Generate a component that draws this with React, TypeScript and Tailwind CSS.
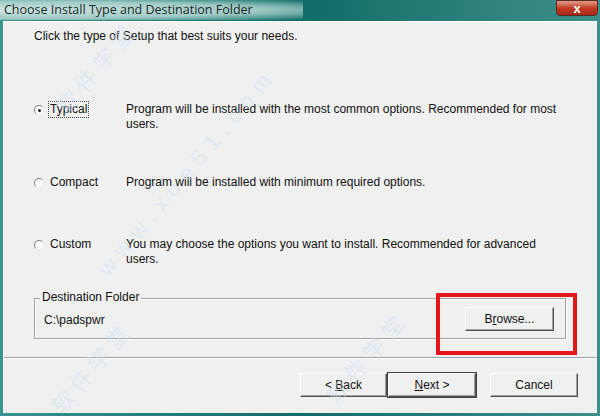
import React from 'react';

const font = { fontFamily: '"Liberation Sans", Arial, sans-serif' };
const cjk = { fontFamily: '"Noto Sans CJK SC", sans-serif' };

function Radio({ checked }: { checked?: boolean }) {
  return (
    <span className="relative inline-block w-[10px] h-[10px] rounded-full border border-t-[#808080] border-l-[#808080] border-r-[#e8e8e8] border-b-[#e8e8e8] bg-white">
      {checked && <span className="absolute left-[3px] top-[3px] w-[3px] h-[3px] rounded-full bg-[#222]" />}
    </span>
  );
}

function Option({ label, checked, focus, lines }: { label: string; checked?: boolean; focus?: boolean; lines: string[] }) {
  return (
    <div className="flex items-start">
      <div className="w-[92px] flex items-center gap-[4px] h-[15px]">
        <Radio checked={checked} />
        <span className={focus ? 'border border-dotted border-[#444] px-[1px] leading-[15px]' : 'px-[2px] leading-[15px]'}>{label}</span>
      </div>
      <div className="leading-[15px]">
        {lines.map((l) => (
          <div key={l}>{l}</div>
        ))}
      </div>
    </div>
  );
}

function Btn({ children, def, className }: { children: React.ReactNode; def?: boolean; className?: string }) {
  return (
    <div
      className={
        'h-[24px] flex items-center justify-center bg-[#f0f0f0] border border-t-[#fdfdfd] border-l-[#fdfdfd] border-r-[#505050] border-b-[#505050] shadow-[inset_-1px_-1px_0_#a0a0a0] ' +
        (def ? 'outline outline-1 outline-[#404040] ' : '') +
        (className || '')
      }
    >
      {children}
    </div>
  );
}

export default function App() {
  return (
    <div className="relative w-[600px] h-[416px] overflow-hidden bg-gradient-to-r from-[#3a9490] via-[#0e6b68] to-[#3d8f8c] flex flex-col text-[12px] text-[#111]" style={font}>
      {/* title bar */}
      <div className="h-[21px] flex items-start justify-between shrink-0">
        <div className="pl-[4px] pt-[1px] text-[12.5px] text-[#1a2a2a] bg-[radial-gradient(ellipse_at_left,#cfe6e2_0%,#9fcac5_60%,transparent_100%)] pr-[50px]" style={{ fontFamily: '"Open Sans", "Noto Sans", sans-serif' }}>
          Choose Install Type and Destination Folder
        </div>
        <div className="mr-[2px] w-[42px] h-[16px] rounded-b-[4px] bg-gradient-to-b from-[#e09a8a] via-[#c23b22] to-[#a82a16] border border-[#5a2a20] flex items-center justify-center text-white text-[13px] font-bold leading-none">
          x
        </div>
      </div>

      {/* body */}
      <div className="flex-1 mx-[3px] mb-[3px] bg-[#f0f0f0] border-t border-l border-white flex flex-col">
        <div className="pl-[30px] mt-[7px] leading-[14px]">Click the type of Setup that best suits your needs.</div>

        <div className="pl-[30px] mt-[59px]">
          <Option
            label="Typical"
            checked
            focus
            lines={['Program will be installed with the most common options. Recommended for most', 'users.']}
          />
        </div>
        <div className="pl-[30px] mt-[43px]">
          <Option label="Compact" lines={['Program will be installed with minimum required options.']} />
        </div>
        <div className="pl-[30px] mt-[47px]">
          <Option
            label="Custom"
            lines={['You may choose the options you want to install. Recommended for advanced', 'users.']}
          />
        </div>

        {/* destination group */}
        <div className="relative ml-[30px] w-[532px] h-[41px] mt-[31px] border border-[#a0a0a0] shadow-[1px_1px_0_#fff,inset_1px_1px_0_#fff] flex items-center justify-between">
          <span className="absolute left-[5px] top-[-9px] bg-[#f0f0f0] px-[2px] leading-[15px]">Destination Folder</span>
          <span className="pl-[9px] pt-[2px]">C:\padspwr</span>
          <Btn className="w-[89px] mr-[11px] mt-[1px]">
            <span>
              B<span className="underline">r</span>owse...
            </span>
          </Btn>
        </div>

        {/* separator */}
        <div className="mt-[18px] h-[2px] border-t border-[#a0a0a0] bg-[#f0f0f0] border-b border-b-white" />

        {/* buttons */}
        <div className="flex mt-[14px] pl-[296px]">
          <Btn className="w-[87px]">
            <span>
              &lt; <span className="underline">B</span>ack
            </span>
          </Btn>
          <Btn def className="w-[88px] ml-[1px]">
            <span>
              <span className="underline">N</span>ext &gt;
            </span>
          </Btn>
          <Btn className="w-[88px] ml-[14px]">Cancel</Btn>
        </div>
      </div>

      {/* highlight rectangle */}
      <div className="absolute left-[436px] top-[293px] w-[141px] h-[62px] border-[4px] border-[#e6151b]" />

      {/* watermark */}
      <div className="pointer-events-none absolute left-[40px] top-[50px] -rotate-[50deg] text-[#cfe0f0] text-[22px] tracking-[6px] opacity-50" style={cjk}>
        软件学堂
      </div>
      <div className="pointer-events-none absolute left-[55px] top-[155px] -rotate-[50deg] text-[#cfe0f0] text-[22px] tracking-[8px] opacity-50">
        www.xue51.com
      </div>
      <div className="pointer-events-none absolute left-[35px] top-[350px] -rotate-[50deg] text-[#cfe0f0] text-[22px] tracking-[6px] opacity-50" style={cjk}>
        软件学堂
      </div>
      <div className="pointer-events-none absolute left-[310px] top-[340px] -rotate-[50deg] text-[#cfe0f0] text-[22px] tracking-[6px] opacity-50" style={cjk}>
        软件学堂
      </div>
    </div>
  );
}
